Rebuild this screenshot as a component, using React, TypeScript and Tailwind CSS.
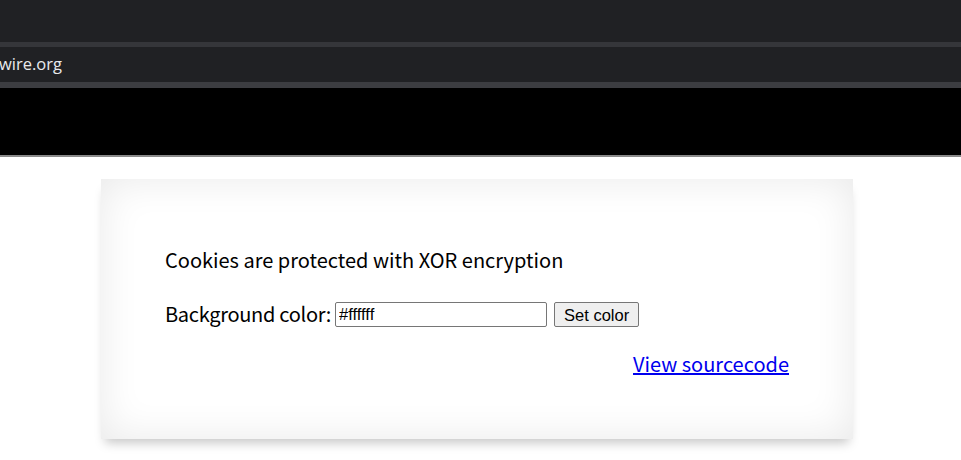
export default function App() {
  return (
    <div className="min-h-[460px] w-full bg-white">
      {/* browser chrome */}
      <div className="h-[42px] bg-[#202124]" />
      <div className="h-[5px] bg-[#35363a]" />
      <div className="flex h-[35px] items-center bg-[#202124]">
        <span className="-ml-px font-['Open_Sans',sans-serif] text-[16.5px] text-[#e8eaed]">wire.org</span>
      </div>
      <div className="h-[6px] bg-[#3c3d41]" />
      <div className="h-[69px] border-b-2 border-[#8a8a8a] bg-black" />

      {/* page */}
      <div className="pl-[101px] pt-[22px]">
        <div className="w-[752px] bg-white px-16 pb-[60px] pt-[66px] shadow-[inset_0_0_40px_rgba(0,0,0,0.09),0_8px_10px_-4px_rgba(0,0,0,0.22)]">
          <p className="font-['Noto_Sans_CJK_KR',sans-serif] text-[20px] text-black">Cookies are protected with XOR encryption</p>
          <form className="mt-[24px] flex items-center font-['Noto_Sans_CJK_KR',sans-serif] text-[20px]" onSubmit={(e) => e.preventDefault()}>
            <label className="mr-[4px] tracking-[-0.3px]">Background color:</label>
            <input
              defaultValue="#ffffff"
              className="mt-px h-[25px] w-[212px] rounded-[2px] border border-[#767676] px-[3px] font-['Liberation_Sans',sans-serif] text-[16.5px] text-black outline-none"
            />
            <button className="ml-[7px] mt-px h-[25px] rounded-[2px] border border-[#767676] bg-[#efefef] px-[9px] font-['Liberation_Sans',sans-serif] text-[16.5px] text-black">
              Set color
            </button>
          </form>
          <div className="mt-[20px] flex justify-end">
            <a href="#" className="font-['Noto_Sans_CJK_KR',sans-serif] text-[20px] text-[#0000ee] underline">View sourcecode</a>
          </div>
        </div>
      </div>
    </div>
  );
}
